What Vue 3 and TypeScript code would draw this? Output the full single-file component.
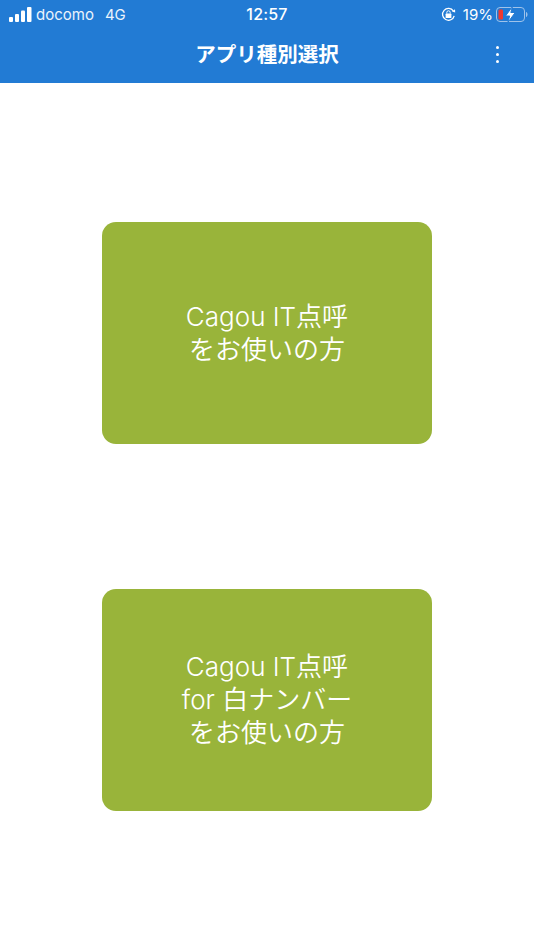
<script setup lang="ts">
const cards: string[][] = [
  ['Cagou IT点呼', 'をお使いの方'],
  ['Cagou IT点呼', 'for 白ナンバー', 'をお使いの方'],
]
</script>

<template>
  <div class="page">
    <header class="header">
      <div class="status">
        <div class="status-left">
          <svg class="signal" width="23" height="15" viewBox="0 0 23 15">
            <rect x="0" y="10" width="4" height="5" rx="1" fill="#fff" />
            <rect x="6" y="7" width="4" height="8" rx="1" fill="#fff" />
            <rect x="12" y="3.500" width="4" height="11.500" rx="1" fill="#fff" />
            <rect x="18" y="0" width="4.500" height="15" rx="1" fill="#fff" />
          </svg>
          <span class="carrier">docomo</span>
          <span class="network">4G</span>
        </div>
        <div class="clock">12:57</div>
        <div class="status-right">
          <svg class="lock" width="15" height="15" viewBox="0 0 15 15">
            <path d="M13.2 8.800A5.900 5.900 0 1 1 12.400 4.100" fill="none" stroke="#fff" stroke-width="1.300" />
            <path d="M11 4.600L14.200 5.500L14 2.200Z" fill="#fff" />
            <rect x="4.600" y="6.500" width="5.800" height="4.600" rx=".7" fill="#fff" />
            <path d="M5.800 6.500V5.500A1.700 1.700 0 0 1 9.200 5.500V6.500" fill="none" stroke="#fff" stroke-width="1" />
          </svg>
          <span class="percent">19%</span>
          <svg class="battery" width="32" height="17" viewBox="0 0 32 17">
            <rect x=".5" y="1.500" width="28" height="14" rx="3.500" fill="none" stroke="#9fc3ea" stroke-width="1" />
            <path d="M30 6C31 6.300 31.500 7.300 31.500 8.500C31.500 9.700 31 10.700 30 11Z" fill="#9fc3ea" />
            <rect x="2.500" y="3.500" width="4.500" height="10" rx="1.200" fill="#f0392f" />
            <path d="M16.500 0.500L9.500 10H13.700L11.800 16.500L19.200 6.500H14.800Z" fill="#fff" stroke="#227bd4" stroke-width="1" />
          </svg>
        </div>
      </div>
      <div class="title-row">
        <h1 class="title">アプリ種別選択</h1>
        <div class="menu" aria-label="menu">
          <span class="dot"></span>
          <span class="dot"></span>
          <span class="dot"></span>
        </div>
      </div>
    </header>
    <main class="content">
      <button v-for="(lines, i) in cards" :key="i" class="card" type="button">
        <span v-for="line in lines" :key="line" class="line">{{ line }}</span>
      </button>
    </main>
  </div>
</template>

<style>
html, body { margin: 0; background: #fff; }
</style>

<style scoped>
.page {
  width: 534px;
  height: 950px;
  background: #fff;
  font-family: "Liberation Sans", "Noto Sans CJK JP", sans-serif;
  display: flex;
  flex-direction: column;
  overflow: hidden;
}
.header {
  height: 83px;
  flex: none;
  background: #227bd4;
  color: #fff;
  box-sizing: border-box;
}
.status {
  height: 28px;
  display: grid;
  grid-template-columns: 1fr auto 1fr;
  align-items: center;
  font-family: Inter, "Liberation Sans", sans-serif;
  font-size: 15px;
  color: #fff;
}
.status-left {
  display: flex;
  align-items: center;
  padding-left: 9px;
}
.carrier { margin-left: 4px; color: #eaf3fc; }
.network { margin-left: 11px; color: #eaf3fc; }
.clock { font-size: 16px; font-weight: 500; letter-spacing: .2px; }
.status-right {
  display: flex;
  align-items: center;
  justify-content: flex-end;
  padding-right: 6px;
}
.percent { margin-left: 7px; margin-right: 3px; font-size: 15px; }
.title-row {
  height: 54px;
  position: relative;
  display: flex;
  align-items: center;
  justify-content: center;
}
.title {
  margin: 0;
  font-size: 20.500px;
  font-weight: 700;
  font-family: "Noto Sans CJK JP", sans-serif;
  line-height: 1;
  position: relative;
  top: -2px;
}
.menu {
  position: absolute;
  right: 35px;
  top: 18px;
  display: flex;
  flex-direction: column;
  gap: 4px;
}
.dot {
  width: 3px;
  height: 3px;
  border-radius: 50%;
  background: #fff;
}
.content {
  flex: 1;
  display: flex;
  flex-direction: column;
  align-items: center;
  padding-top: 139px;
  gap: 145.500px;
}
.card {
  width: 330px;
  height: 221.500px;
  border: 0;
  padding: 0;
  border-radius: 14px;
  background: #99b43a;
  color: #fff;
  font-family: Inter, "Noto Sans CJK JP", sans-serif;
  font-size: 26px;
  font-weight: 350;
  display: flex;
  flex-direction: column;
  align-items: center;
  justify-content: center;
  line-height: 33px;
}
.line { display: block; white-space: nowrap; }
</style>
